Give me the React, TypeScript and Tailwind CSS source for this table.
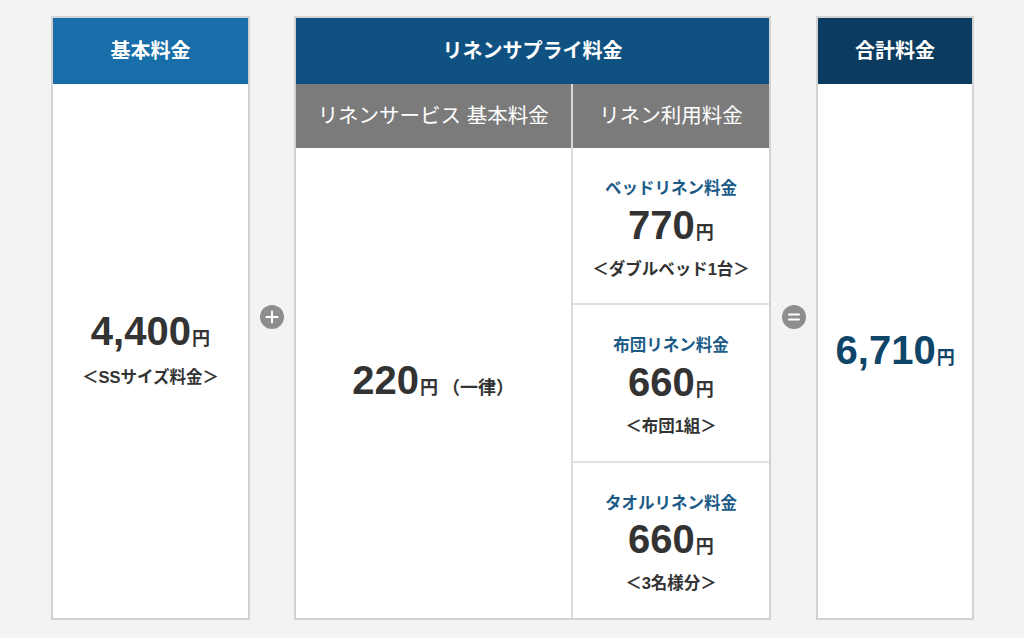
import React from 'react';

const FONT = "font-['Liberation_Sans','Noto_Sans_CJK_JP',sans-serif]";

type Price = { value: string; note?: string; color?: string };

const Amount: React.FC<Price> = ({ value, note, color = 'text-[#333333]' }) => (
  <div className={`flex items-baseline justify-center ${color}`}>
    <span className="text-[40px] font-bold leading-none">{value}</span>
    <span className="ml-[1px] text-[18px] font-bold leading-none">円</span>
    {note && <span className="ml-[4px] text-[18px] font-bold leading-none">{note}</span>}
  </div>
);

const Circle: React.FC<{ kind: 'plus' | 'equal' }> = ({ kind }) => (
  <div className="flex w-full items-center justify-center">
    <svg width="24" height="24" viewBox="0 0 24 24">
      <circle cx="12" cy="12" r="12" fill="#8e8e8e" />
      {kind === 'plus' ? (
        <path d="M12 6.5v11M6.5 12h11" stroke="#fff" strokeWidth="2" strokeLinecap="round" />
      ) : (
        <path d="M7 9.5h10M7 14.5h10" stroke="#fff" strokeWidth="2" strokeLinecap="round" />
      )}
    </svg>
  </div>
);

const linenRows = [
  { label: 'ベッドリネン料金', price: '770', note: '＜ダブルベッド1台＞' },
  { label: '布団リネン料金', price: '660', note: '＜布団1組＞' },
  { label: 'タオルリネン料金', price: '660', note: '＜3名様分＞' },
];

export default function App() {
  return (
    <div className={`min-h-[638px] w-full bg-[#f3f3f3] pt-4 ${FONT}`}>
      <div className="mx-auto flex h-[604px] w-[924px] pl-[1px]">
        {/* 基本料金 */}
        <div className="flex w-[199px] flex-col border-2 border-[#d2d2d2] bg-white">
          <div className="flex h-[66px] items-center justify-center bg-[#186ea8] text-[20px] font-bold text-white">
            基本料金
          </div>
          <div className="flex flex-1 flex-col items-center justify-center pb-[2px]">
            <Amount value="4,400" />
            <div className="mt-[14px] text-[16.5px] font-bold text-[#333333]">＜SSサイズ料金＞</div>
          </div>
        </div>

        <div className="flex w-[44px] items-center pb-[2px]">
          <Circle kind="plus" />
        </div>

        {/* リネンサプライ料金 */}
        <div className="flex w-[478px] flex-col border-2 border-[#d2d2d2] bg-white">
          <div className="flex h-[66px] items-center justify-center bg-[#0f5282] text-[20px] font-bold text-white">
            リネンサプライ料金
          </div>
          <div className="flex h-[64px] bg-[#7b7b7b] text-[20.5px] text-white">
            <div className="flex w-[277px] items-center justify-center border-r-2 border-[#d8d8d8]">
              リネンサービス 基本料金
            </div>
            <div className="flex flex-1 items-center justify-center">リネン利用料金</div>
          </div>
          <div className="flex flex-1">
            <div className="flex w-[277px] items-center justify-center border-r-2 border-[#dcdcdc] pb-[6px]">
              <Amount value="220" note="（一律）" />
            </div>
            <div className="flex flex-1 flex-col">
              {linenRows.map((row, i) => (
                <div
                  key={row.label}
                  className={`flex flex-1 flex-col items-center justify-center pt-[6px] ${i < 2 ? 'border-b-2 border-[#e0e0e0]' : ''}`}
                >
                  <div className="text-[16.5px] font-bold text-[#1b5b88]">{row.label}</div>
                  <div className="mt-[4px]">
                    <Amount value={row.price} />
                  </div>
                  <div className="mt-[12px] text-[16.5px] font-bold text-[#333333]">{row.note}</div>
                </div>
              ))}
            </div>
          </div>
        </div>

        <div className="flex w-[45px] items-center pb-[2px]">
          <Circle kind="equal" />
        </div>

        {/* 合計料金 */}
        <div className="flex w-[158px] flex-col border-2 border-[#d2d2d2] bg-white">
          <div className="flex h-[66px] items-center justify-center bg-[#0b3b5f] text-[20px] font-bold text-white">
            合計料金
          </div>
          <div className="flex flex-1 items-center justify-center pb-[2px]">
            <Amount value="6,710" color="text-[#0e4569]" />
          </div>
        </div>
      </div>
    </div>
  );
}
